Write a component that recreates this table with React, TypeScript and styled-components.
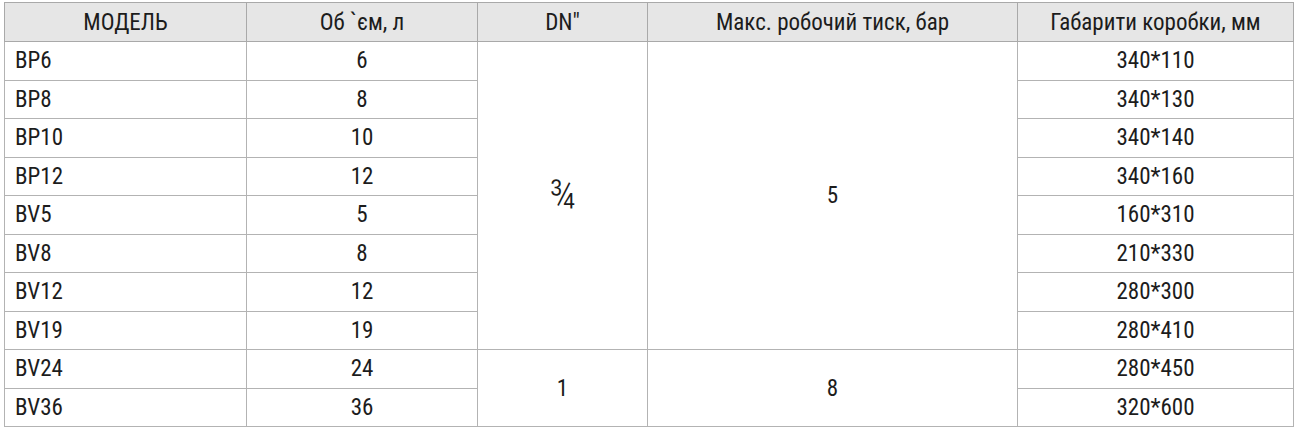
import React from "react";
import styled, { createGlobalStyle } from "styled-components";

const Global = createGlobalStyle`
  html, body { margin: 0; padding: 0; background: #ffffff; }
  body { font-family: "Roboto Condensed", "Liberation Sans Narrow", "DejaVu Sans Condensed", sans-serif; }
`;

const Page = styled.div`
  padding: 2px 0 0 4px;
`;

const Table = styled.table`
  border-collapse: collapse;
  table-layout: fixed;
  width: 1289px;
  color: #1c1c1c;
  font-size: 23px;
`;

const HeadCell = styled.th`
  background: #e6e6e6;
  border: 1px solid #a9a9a9;
  font-weight: 400;
  height: 38px;
  padding: 0;
  text-align: center;
  vertical-align: middle;
`;

const Cell = styled.td<{ $left?: boolean }>`
  border: 1px solid #b3b3b3;
  height: 37.5px;
  padding: 0 ${(p) => (p.$left ? "10px" : "0")};
  text-align: ${(p) => (p.$left ? "left" : "center")};
  vertical-align: middle;
`;

const Fraction = styled.span`
  display: inline-block;
  font-size: 40px;
  font-weight: 300;
  line-height: 1;
`;

const cols = [242, 231, 170, 370, 276];

const rows = [
  ["BP6", "6", "340*110"],
  ["BP8", "8", "340*130"],
  ["BP10", "10", "340*140"],
  ["BP12", "12", "340*160"],
  ["BV5", "5", "160*310"],
  ["BV8", "8", "210*330"],
  ["BV12", "12", "280*300"],
  ["BV19", "19", "280*410"],
  ["BV24", "24", "280*450"],
  ["BV36", "36", "320*600"],
];

export default function App() {
  return (
    <>
      <Global />
      <Page>
        <Table>
          <colgroup>
            {cols.map((w, i) => (
              <col key={i} style={{ width: w }} />
            ))}
          </colgroup>
          <thead>
            <tr>
              <HeadCell>МОДЕЛЬ</HeadCell>
              <HeadCell>Об `єм, л</HeadCell>
              <HeadCell>DN"</HeadCell>
              <HeadCell>Макс. робочий тиск, бар</HeadCell>
              <HeadCell>Габарити коробки, мм</HeadCell>
            </tr>
          </thead>
          <tbody>
            {rows.map((r, i) => (
              <tr key={r[0]}>
                <Cell $left>{r[0]}</Cell>
                <Cell>{r[1]}</Cell>
                {i === 0 && (
                  <>
                    <Cell rowSpan={8}>
                      <Fraction>¾</Fraction>
                    </Cell>
                    <Cell rowSpan={8}>5</Cell>
                  </>
                )}
                {i === 8 && (
                  <>
                    <Cell rowSpan={2}>1</Cell>
                    <Cell rowSpan={2}>8</Cell>
                  </>
                )}
                <Cell>{r[2]}</Cell>
              </tr>
            ))}
          </tbody>
        </Table>
      </Page>
    </>
  );
}
